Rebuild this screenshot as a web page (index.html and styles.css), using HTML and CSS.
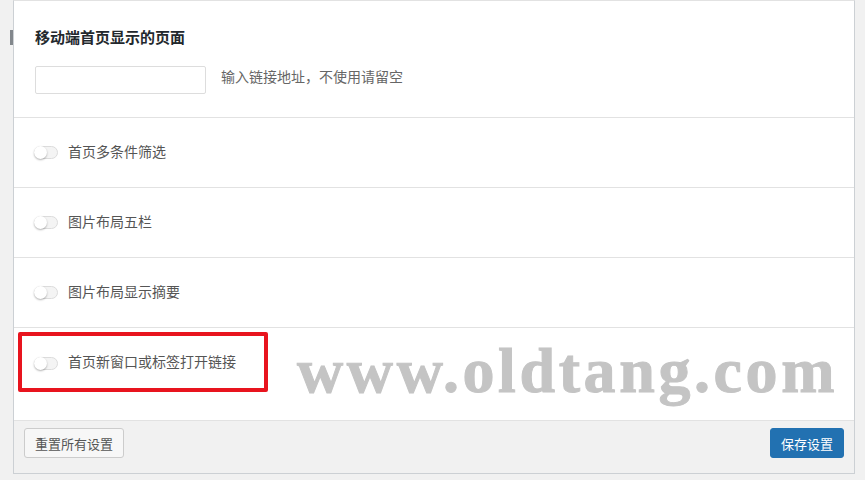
FILE: index.html
```html
<!DOCTYPE html>
<html lang="zh-CN">
<head>
    <meta charset="UTF-8">
    <title>主题设置</title>
    <link rel="stylesheet" href="styles.css">
</head>
<body>
    <div class="page">
        <div class="gutter"><span class="gutter-mark"></span></div>

        <div class="panel">
            <div class="section section-first">
                <h3 class="section-title">移动端首页显示的页面</h3>
                <div class="field-row">
                    <input type="text" class="text-input">
                    <span class="hint">输入链接地址，不使用请留空</span>
                </div>
            </div>

            <div class="section toggle-row">
                <span class="toggle"><span class="knob"></span></span>
                <span class="toggle-label">首页多条件筛选</span>
            </div>

            <div class="section toggle-row">
                <span class="toggle"><span class="knob"></span></span>
                <span class="toggle-label">图片布局五栏</span>
            </div>

            <div class="section toggle-row">
                <span class="toggle"><span class="knob"></span></span>
                <span class="toggle-label">图片布局显示摘要</span>
            </div>

            <div class="section toggle-row toggle-last">
                <span class="toggle"><span class="knob"></span></span>
                <span class="toggle-label">首页新窗口或标签打开链接</span>
                <span class="highlight-box"></span>
                <span class="watermark">www.oldtang.com</span>
            </div>

            <div class="panel-footer">
                <button class="btn btn-reset">重置所有设置</button>
                <button class="btn btn-save">保存设置</button>
            </div>
        </div>
    </div>
</body>
</html>
```

FILE: styles.css
```css
* {
    margin: 0;
    padding: 0;
    box-sizing: border-box;
}

body {
    background: #f1f1f1;
    font-family: "Liberation Sans", "Noto Sans CJK SC", sans-serif;
    color: #555;
    height: 480px;
    overflow: hidden;
}

.page {
    display: flex;
    align-items: flex-start;
}

.gutter {
    width: 13px;
    display: flex;
    justify-content: flex-end;
    padding-top: 30px;
}

.gutter-mark {
    display: block;
    width: 3px;
    height: 15px;
    background: #82878c;
}

.panel {
    width: 842px;
    background: #fff;
    border: 1px solid #ccd0d4;
    border-top-color: #e2e2e2;
}

.section {
    border-bottom: 1px solid #e2e2e2;
}

.section-first {
    padding: 27px 21px 22px;
    height: 117px;
}

.section-title {
    font-size: 15px;
    font-weight: bold;
    color: #23282d;
    line-height: 20px;
    margin-bottom: 18px;
}

.field-row {
    display: flex;
    align-items: flex-start;
    gap: 15px;
}

.text-input {
    width: 171px;
    height: 28px;
    border: 1px solid #ddd;
    border-radius: 2px;
    background: #fff;
    outline: none;
}

.hint {
    font-size: 14px;
    line-height: 20px;
    margin-top: 1px;
    color: #666;
}

.toggle-row {
    display: flex;
    align-items: center;
    gap: 10px;
    height: 70px;
    padding-left: 20px;
}

.toggle-last {
    position: relative;
    align-items: flex-start;
    height: 93px;
    padding-top: 25px;
}

.toggle {
    display: block;
    position: relative;
    width: 24px;
    height: 13px;
    border: 1px solid #dcdcdc;
    border-radius: 7px;
    background: #f4f4f4;
}

.knob {
    position: absolute;
    left: -1px;
    top: -1px;
    width: 13px;
    height: 13px;
    border-radius: 50%;
    background: #fff;
    box-shadow: 0 1px 2px rgba(0, 0, 0, 0.3);
}

.toggle-label {
    font-size: 14px;
    color: #555;
    line-height: 20px;
}

.toggle-row .toggle-label {
    margin-top: -1px;
}

.toggle-last .toggle {
    margin-top: 4px;
}

.toggle-last .toggle-label {
    margin-top: -1px;
}

.highlight-box {
    position: absolute;
    left: 4px;
    top: 4px;
    width: 250px;
    height: 60px;
    border: 4px solid #e8141e;
    border-radius: 2px;
}

.watermark {
    position: absolute;
    left: 283px;
    top: 3px;
    font-family: "Liberation Serif", serif;
    font-weight: bold;
    font-size: 64px;
    letter-spacing: 3.6px;
    color: #c4c4c4;
    -webkit-text-stroke: 1px #c4c4c4;
    line-height: 80px;
    white-space: nowrap;
}

.panel-footer {
    display: flex;
    justify-content: space-between;
    align-items: flex-start;
    height: 52px;
    padding: 7px 10px 0 10px;
    background: #f1f1f1;
}

.btn {
    height: 30px;
    font-size: 13px;
    font-family: "Liberation Sans", "Noto Sans CJK SC", sans-serif;
    border-radius: 3px;
    padding: 0 10px;
    white-space: nowrap;
    cursor: pointer;
}

.btn-reset {
    background: #f7f7f7;
    border: 1px solid #ccc;
    color: #555;
}

.btn-save {
    background: #2271b1;
    border: 1px solid #2271b1;
    color: #fff;
}
```
